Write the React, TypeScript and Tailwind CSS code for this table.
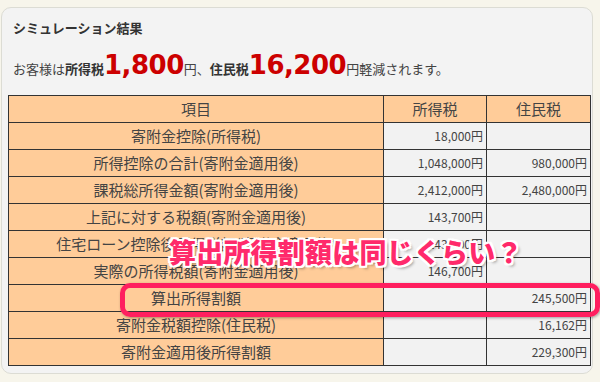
import React from 'react';

const rows = [
  { label: '寄附金控除(所得税)', income: '18,000円', resident: '' },
  { label: '所得控除の合計(寄附金適用後)', income: '1,048,000円', resident: '980,000円' },
  { label: '課税総所得金額(寄附金適用後)', income: '2,412,000円', resident: '2,480,000円' },
  { label: '上記に対する税額(寄附金適用後)', income: '143,700円', resident: '' },
  { label: '住宅ローン控除後所得税額(寄附金適用後)', income: '143,700円', resident: '' },
  { label: '実際の所得税額(寄附金適用後)', income: '146,700円', resident: '' },
  { label: '算出所得割額', income: '', resident: '245,500円' },
  { label: '寄附金税額控除(住民税)', income: '', resident: '16,162円' },
  { label: '寄附金適用後所得割額', income: '', resident: '229,300円' },
];

export default function App() {
  return (
    <div className="w-[600px] h-[382px] overflow-hidden bg-[#f7f5eb] pt-[7px] pl-[1px] font-['Noto_Sans_CJK_JP',sans-serif] text-[#333]">
      <div className="relative w-[592px] h-[367px] rounded-[10px] border border-[#dcdcd4] bg-[#f3f3f3]">
        {/* heading */}
        <div className="pl-[11px] pt-[11px] text-[13px] leading-[18px] font-bold text-[#333]">
          シミュレーション結果
        </div>
        <div className="pl-[11px] mt-[12px] flex items-baseline h-[32px] text-[13px] text-[#444]">
          <span>お客様は</span>
          <span className="font-bold text-[#333]">所得税</span>
          <span className="font-['DejaVu_Sans',sans-serif] font-bold text-[26px] leading-[32px] text-[#cc0000] tracking-[-0.5px]">1,800</span>
          <span>円、</span>
          <span className="font-bold text-[#333]">住民税</span>
          <span className="font-['DejaVu_Sans',sans-serif] font-bold text-[26px] leading-[32px] text-[#cc0000] tracking-[-0.5px]">16,200</span>
          <span>円軽減されます。</span>
        </div>

        {/* table */}
        <table className="ml-[6px] mt-[14px] w-[582px] border-collapse table-fixed">
          <colgroup>
            <col className="w-[375px]" />
            <col className="w-[103px]" />
            <col className="w-[104px]" />
          </colgroup>
          <thead>
            <tr className="h-[27px] bg-[#ffcc99] text-[15px] text-[#444]">
              <th className="border border-[#333] font-normal leading-[20px] p-0">項目</th>
              <th className="border border-[#333] font-normal leading-[20px] p-0">所得税</th>
              <th className="border border-[#333] font-normal leading-[20px] p-0">住民税</th>
            </tr>
          </thead>
          <tbody>
            {rows.map((r) => (
              <tr key={r.label} className="h-[27px]">
                <td className="border border-[#333] bg-[#ffcc99] text-center text-[15px] leading-[20px] text-[#444] p-0 whitespace-nowrap">
                  {r.label}
                </td>
                <td className="border border-[#333] bg-[#f2f2f2] text-right text-[12px] leading-[16px] text-[#444] pr-[3px] py-0">
                  {r.income}
                </td>
                <td className="border border-[#333] bg-[#f2f2f2] text-right text-[12px] leading-[16px] text-[#444] pr-[3px] py-0">
                  {r.resident}
                </td>
              </tr>
            ))}
          </tbody>
        </table>

        {/* annotation */}
        <div className="absolute left-[167px] top-[228px] text-[27px] leading-[32px] font-black tracking-[0.2px] text-[#ff2a6b] whitespace-nowrap [text-shadow:2px_0_0_#fff,-2px_0_0_#fff,0_2px_0_#fff,0_-2px_0_#fff,2px_2px_0_#fff,-2px_-2px_0_#fff,2px_-2px_0_#fff,-2px_2px_0_#fff,3px_3px_3px_rgba(0,0,0,0.35)]">
          算出所得割額は同じくらい？
        </div>
        <div className="absolute left-[118px] top-[275px] w-[480px] h-[34px] rounded-[10px] shadow-[inset_0_0_0_5px_#ff1f5f,1px_1px_3px_rgba(0,0,0,0.35)]" />
      </div>
    </div>
  );
}
